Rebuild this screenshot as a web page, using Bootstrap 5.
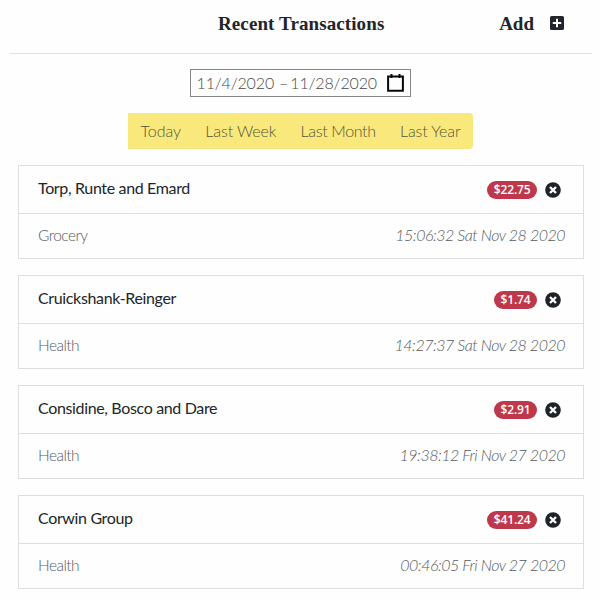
<!DOCTYPE html>
<html lang="en">
<head>
<meta charset="utf-8">
<meta name="viewport" content="width=device-width, initial-scale=1">
<title>Recent Transactions</title>
<link rel="stylesheet" href="https://cdn.jsdelivr.net/npm/bootstrap@5.3.0/dist/css/bootstrap.min.css">
<style>
body{font-family:Lato,"Open Sans",sans-serif;font-size:16px;font-weight:300;line-height:24px;color:#212529;background:#fefefe;overflow:hidden}
.page-head{height:54px;margin:0 8px 0 10px;border-bottom:1px solid #dfdfdf;font-family:"Liberation Serif",serif;font-weight:700;font-size:19px;line-height:24px;padding:12px 28px 0 208px}
.head-title{letter-spacing:.1px}
.add-link{font-size:19px}
.add-link svg{margin-top:-2px}
.date-box{width:221px;height:28px;margin-top:15px;border:1px solid #858585;color:#45494c;padding:0 6px;white-space:nowrap}
.date-from{letter-spacing:-.15px}
.date-dash{margin:0 2px 0 5px}
.date-to{letter-spacing:-.15px}
.range-bar{width:345px;height:36px;margin-top:16px;background:#f9e87b;border-radius:0 4px 4px 0;color:#57543a;padding:0 12px 1px 13px}
.range-wide{letter-spacing:-.35px}
.range-mid{letter-spacing:-.1px}
.trans-list{padding:16px 16px 0 18px}
.trans{height:94px;margin-bottom:16px;border:1px solid #dedede;border-radius:0;background:#fefefe}
.trans-top{height:48px;padding:0 23px 0 19px;border-bottom:1px solid #dedede;font-weight:400}
.trans-name{letter-spacing:-.35px;padding-bottom:3px}
.trans-sub{height:45px;padding:0 18px 3px 19px;color:#575b5f}
.trans-kind{font-size:15.5px;letter-spacing:-.55px}
.trans-sub em{letter-spacing:-.5px}
.amount{height:18px;padding:0 6.5px;border-radius:9px;background:#bf374a;color:#fff;font-family:"Open Sans",sans-serif;font-size:12px;line-height:18px;font-weight:600;letter-spacing:-.15px}
.trans-top svg{margin-right:-1px}
</style>
<script src="https://cdn.jsdelivr.net/npm/bootstrap@5.3.0/dist/js/bootstrap.bundle.min.js"></script>
</head>
<body>
<svg class="d-none">
<symbol id="close" viewBox="0 0 16 16"><circle cx="8" cy="8" r="7.8" fill="#1f2429"/><path d="M5 5l6 6M11 5l-6 6" stroke="#fff" stroke-width="2.3"/></symbol>
</svg>
<header class="page-head d-flex justify-content-between align-items-start">
<span class="head-title">Recent Transactions</span>
<span class="add-link d-flex align-items-center gap-3"><span>Add</span><svg width="14" height="14" viewBox="0 0 14 14"><rect width="14" height="14" rx="1.6" fill="#20262b"/><path d="M7 2.8v8.4M2.8 7h8.4" stroke="#fff" stroke-width="2"/></svg></span>
</header>
<div class="date-box d-flex align-items-center mx-auto">
<span class="date-from">11/4/2020</span><span class="date-dash">–</span><span class="date-to">11/28/2020</span>
<svg class="ms-auto" width="17" height="18" viewBox="0 0 17 18"><path d="M1.1 2.5h14.8v14.2H1.1zM4.5 0v4M12.5 0v4" fill="none" stroke="#080808" stroke-width="2"/></svg>
</div>
<nav class="range-bar d-flex align-items-center justify-content-between mx-auto">
<span>Today</span><span class="range-mid">Last Week</span><span class="range-wide">Last Month</span><span class="range-mid">Last Year</span>
</nav>
<main class="trans-list">
<article class="trans"><div class="trans-top d-flex align-items-center"><span class="trans-name">Torp, Runte and Emard</span><span class="amount ms-auto me-2">$22.75</span><svg width="16" height="16"><use href="#close"/></svg></div><div class="trans-sub d-flex align-items-center justify-content-between"><span class="trans-kind">Grocery</span><em>15:06:32 Sat Nov 28 2020</em></div></article>
<article class="trans"><div class="trans-top d-flex align-items-center"><span class="trans-name">Cruickshank-Reinger</span><span class="amount ms-auto me-2">$1.74</span><svg width="16" height="16"><use href="#close"/></svg></div><div class="trans-sub d-flex align-items-center justify-content-between"><span class="trans-kind">Health</span><em>14:27:37 Sat Nov 28 2020</em></div></article>
<article class="trans"><div class="trans-top d-flex align-items-center"><span class="trans-name">Considine, Bosco and Dare</span><span class="amount ms-auto me-2">$2.91</span><svg width="16" height="16"><use href="#close"/></svg></div><div class="trans-sub d-flex align-items-center justify-content-between"><span class="trans-kind">Health</span><em>19:38:12 Fri Nov 27 2020</em></div></article>
<article class="trans"><div class="trans-top d-flex align-items-center"><span class="trans-name">Corwin Group</span><span class="amount ms-auto me-2">$41.24</span><svg width="16" height="16"><use href="#close"/></svg></div><div class="trans-sub d-flex align-items-center justify-content-between"><span class="trans-kind">Health</span><em>00:46:05 Fri Nov 27 2020</em></div></article>
</main>
</body>
</html>
